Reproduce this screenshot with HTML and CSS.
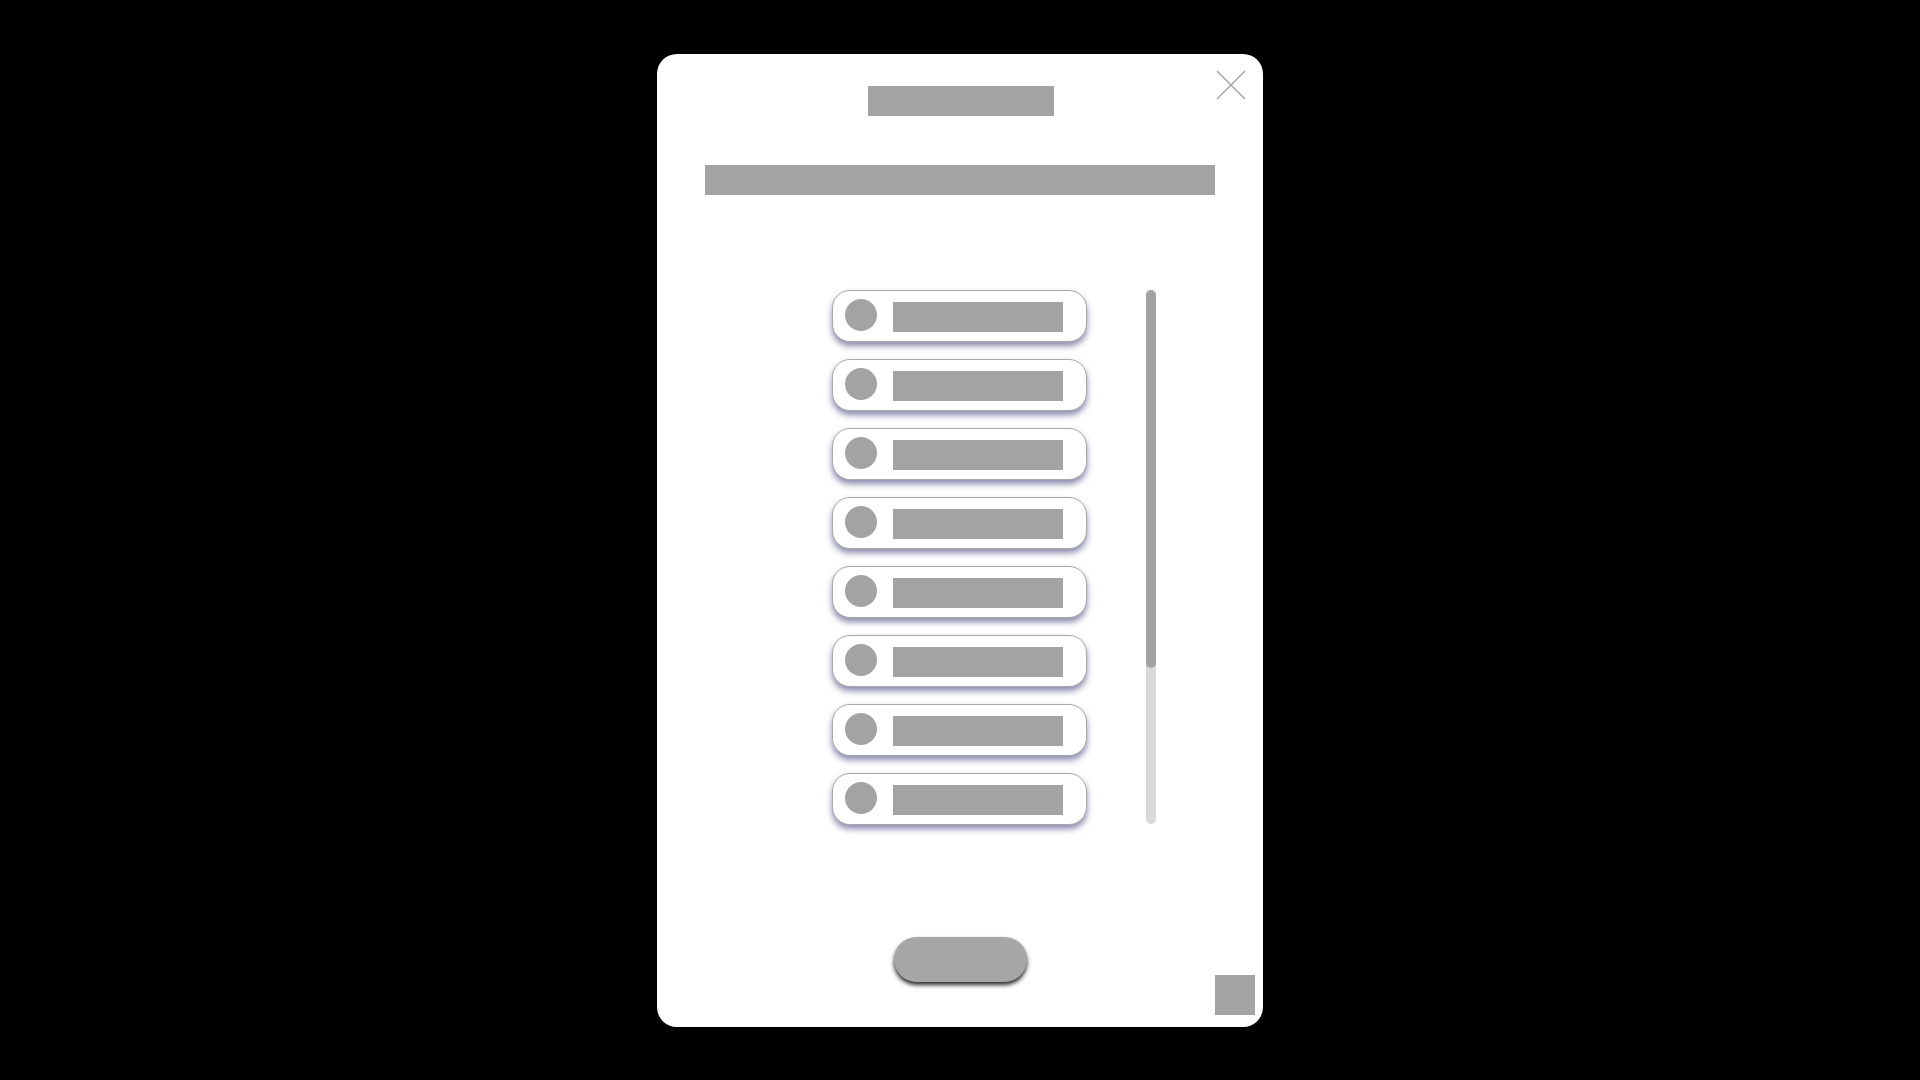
FILE: index.html
```html
<!DOCTYPE html>
<html lang="en">
<head>
    <meta charset="UTF-8">
    <title>Select option</title>
    <link rel="stylesheet" href="styles.css">
</head>
<body>
<div class="modal">
    <button class="close" aria-label="Close">
        <svg width="30" height="30" viewBox="0 0 30 30">
            <path d="M1 1 L29 29 M29 1 L1 29" />
        </svg>
    </button>

    <div class="title"></div>
    <div class="subtitle"></div>

    <div class="picker">
        <div class="options">
            <div class="option"><span class="dot"></span><span class="label"></span></div>
            <div class="option"><span class="dot"></span><span class="label"></span></div>
            <div class="option"><span class="dot"></span><span class="label"></span></div>
            <div class="option"><span class="dot"></span><span class="label"></span></div>
            <div class="option"><span class="dot"></span><span class="label"></span></div>
            <div class="option"><span class="dot"></span><span class="label"></span></div>
            <div class="option"><span class="dot"></span><span class="label"></span></div>
            <div class="option"><span class="dot"></span><span class="label"></span></div>
        </div>
        <div class="track">
            <div class="thumb"></div>
        </div>
    </div>

    <button class="confirm"></button>
    <div class="corner"></div>
</div>
</body>
</html>
```

FILE: styles.css
```css
body {
    margin: 0;
    height: 100vh;
    background: #000;
    font-family: "Liberation Sans", sans-serif;
    display: flex;
    align-items: center;
    justify-content: center;
}

.modal {
    position: relative;
    box-sizing: border-box;
    width: 606px;
    height: 973px;
    background: #fff;
    border-radius: 20px;
    padding-top: 32px;
    display: flex;
    flex-direction: column;
    align-items: center;
}

.close {
    position: absolute;
    top: 16px;
    right: 17px;
    width: 30px;
    height: 30px;
    padding: 0;
    border: none;
    background: none;
}
.close svg {
    display: block;
}
.close path {
    stroke: #a8a8a8;
    stroke-width: 1.6;
    fill: none;
}

.title {
    width: 186px;
    height: 30px;
    margin-left: 2px;
    background: #a3a3a3;
}

.subtitle {
    width: 510px;
    height: 30px;
    margin-top: 49px;
    background: #a3a3a3;
}

/* list of options with its own scroll track on the right */
.picker {
    width: 100%;
    margin-top: 95px;
    display: grid;
    grid-template-columns: 1fr auto 1fr;
}

.options {
    grid-column: 2;
    display: flex;
    flex-direction: column;
    gap: 17px;
    margin-left: -2px;
}

.option {
    box-sizing: border-box;
    width: 255px;
    height: 52px;
    border: 1px solid #a9a9a9;
    border-radius: 18px;
    background: #fff;
    box-shadow: 0 4px 6px rgba(60, 60, 120, 0.6);
    padding: 0 0 9px 12px;
    display: flex;
    align-items: flex-end;
}

.dot {
    width: 32px;
    height: 32px;
    border-radius: 50%;
    background: #a3a3a3;
    margin-bottom: 1px;
}

.label {
    width: 170px;
    height: 30px;
    margin-left: 16px;
    background: #a3a3a3;
}

.track {
    grid-column: 3;
    width: 10px;
    height: 534px;
    margin-left: 59px;
    border-radius: 5px;
    background: #d9d9d9;
}
.thumb {
    height: 378px;
    border-radius: 5px;
    background: #a3a3a3;
}

.confirm {
    width: 133px;
    height: 45px;
    margin-top: 112px;
    padding: 0;
    border: none;
    border-radius: 23px;
    background: #a6a6a6;
    box-shadow: 0 3px 4px rgba(0, 0, 0, 0.85);
}

.corner {
    position: absolute;
    right: 8px;
    bottom: 12px;
    width: 40px;
    height: 40px;
    background: #a3a3a3;
}
```
